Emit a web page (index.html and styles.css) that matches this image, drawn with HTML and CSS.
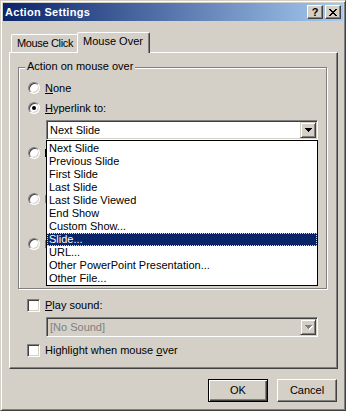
FILE: index.html
```html
<!DOCTYPE html>
<html lang="en">
<head>
  <meta charset="UTF-8">
  <title>Action Settings</title>
  <link rel="stylesheet" href="styles.css">
</head>
<body>
  <div class="window">
    <div class="titlebar">
      <span class="title">Action Settings</span>
      <div class="caption-btns">
        <span class="caption-btn help">?</span>
        <span class="caption-btn">
          <svg width="8" height="7" viewBox="0 0 8 7" shape-rendering="crispEdges"><path d="M0 0h2v1h-2zM6 0h2v1h-2zM1 1h2v1h-2zM5 1h2v1h-2zM2 2h4v1h-4zM3 3h2v1h-2zM2 4h4v1h-4zM1 5h2v1h-2zM5 5h2v1h-2zM0 6h2v1h-2zM6 6h2v1h-2z"/></svg>
        </span>
      </div>
    </div>

    <div class="client">
      <div class="tabs">
        <div class="tab first-tab">Mouse Click</div>
        <div class="tab active">Mouse Over</div>
      </div>

      <div class="panel">
        <div class="group">
          <div class="group-title">Action on mouse over</div>

          <div class="option first"><span class="radio"></span><span class="label"><u>N</u>one</span></div>
          <div class="option"><span class="radio checked"></span><span class="label"><u>H</u>yperlink to:</span></div>

          <div class="combo-wrap">
            <div class="combo">
              <span class="combo-text">Next Slide</span>
              <span class="drop-btn">
                <svg width="7" height="4" viewBox="0 0 7 4" shape-rendering="crispEdges"><path d="M0 0H7V1H6V2H5V3H4V4H3V3H2V2H1V1H0Z"/></svg>
              </span>
            </div>
            <ul class="droplist">
              <li>Next Slide</li>
              <li>Previous Slide</li>
              <li>First Slide</li>
              <li>Last Slide</li>
              <li>Last Slide Viewed</li>
              <li>End Show</li>
              <li>Custom Show...</li>
              <li class="selected">Slide...</li>
              <li>URL...</li>
              <li>Other PowerPoint Presentation...</li>
              <li>Other File...</li>
            </ul>
          </div>

          <!-- rows under the open list: only the first letter's stem peeks out -->
          <div class="option run-program"><span class="radio"></span><span class="stem"></span></div>
          <div class="option run-macro disabled"><span class="radio"></span><span class="stem"></span></div>
          <div class="option object-action disabled"><span class="radio"></span><span class="stem"></span></div>
        </div>

        <div class="check-row sound"><span class="check"></span><span class="label"><u>P</u>lay sound:</span></div>
        <div class="combo disabled sound-combo">
          <span class="combo-text">[No Sound]</span>
          <span class="drop-btn">
            <svg width="7" height="4" viewBox="0 0 7 4" shape-rendering="crispEdges"><path d="M0 0H7V1H6V2H5V3H4V4H3V3H2V2H1V1H0Z"/></svg>
          </span>
        </div>
        <div class="check-row highlight"><span class="check"></span><span class="label">Highlight when mouse <u>o</u>ver</span></div>
      </div>

      <div class="buttons">
        <div class="btn default">OK</div>
        <div class="btn">Cancel</div>
      </div>
    </div>
  </div>
</body>
</html>
```

FILE: styles.css
```css
* {
  box-sizing: border-box;
}
body {
  margin: 0;
  background: #d4d0c8;
  font-family: 'Liberation Sans', Arial, sans-serif;
  font-size: 11px;
  color: #000;
}
u {
  text-decoration-thickness: 1px;
  text-underline-offset: 1px;
}

/* window frame */
.window {
  width: 346px;
  height: 411px;
  background: #d4d0c8;
  border: 1px solid;
  border-color: #d4d0c8 #404040 #404040 #d4d0c8;
  box-shadow: inset 1px 1px #fff, inset -1px -1px #808080;
  padding: 2px;
}
.titlebar {
  height: 18px;
  display: flex;
  align-items: center;
  justify-content: space-between;
  padding: 0 2px;
  background: linear-gradient(to right, #0a246a, #a6caf0);
}
.title {
  color: #fff;
  font-weight: bold;
  letter-spacing: 0.3px;
  line-height: 18px;
}
.caption-btns {
  display: flex;
  gap: 2px;
}
.caption-btn {
  width: 16px;
  height: 14px;
  display: flex;
  align-items: center;
  justify-content: center;
  background: #d4d0c8;
  border: 1px solid;
  border-color: #fff #404040 #404040 #fff;
  box-shadow: inset -1px -1px #808080;
  font-weight: bold;
  font-size: 11px;
  line-height: 12px;
}
.caption-btn svg {
  margin-left: -1px;
}

.client {
  padding: 11px 5px 5px 6px;
}

/* tabs */
.tabs {
  display: flex;
  align-items: flex-end;
  height: 20px;
  padding-left: 2px;
  position: relative;
  z-index: 1;
}
.tab {
  height: 18px;
  padding: 2px 0 0 5px;
  line-height: 13px;
  background: #d4d0c8;
  border: 1px solid;
  border-bottom: none;
  border-color: #fff #404040 transparent #fff;
  box-shadow: inset -1px 0 #808080;
  border-radius: 2px 2px 0 0;
  width: 68px;
  white-space: nowrap;
}
.first-tab {
  letter-spacing: -0.35px;
}
.tab.active {
  width: 73px;
  height: 21px;
  margin-left: -2px;
  margin-bottom: -1px;
  position: relative;
}

.panel {
  width: 329px;
  height: 317px;
  border: 1px solid;
  border-color: #fff #404040 #404040 #fff;
  box-shadow: inset -1px -1px #808080;
}

/* group box */
.group {
  margin: 14px 0 0 8px;
  width: 309px;
  height: 222px;
  border: 1px solid #808080;
  box-shadow: inset 1px 1px #fff, 1px 1px #fff;
}
.group-title {
  width: fit-content;
  margin: -8px 0 0 6px;
  padding: 0 2px;
  line-height: 13px;
  background: #d4d0c8;
}

.option {
  display: flex;
  align-items: center;
  height: 16px;
  padding-left: 9px;
  margin-top: 4px;
}
.option.first {
  margin-top: 7px;
}
.option.run-program {
  margin-top: 5px;
}
.option.run-macro {
  margin-top: 30px;
}
.option.object-action {
  margin-top: 29px;
}
.label {
  line-height: 13px;
  margin-left: 5px;
  white-space: nowrap;
}
.stem {
  width: 1px;
  height: 8px;
  margin-left: 5px;
  background: #000;
}
.disabled .stem {
  background: #808080;
  box-shadow: 1px 1px #fff;
}

.radio {
  width: 12px;
  height: 12px;
  flex: none;
  border-radius: 50%;
  background: #fff;
  border: 1px solid;
  border-color: #808080 #fff #fff #808080;
  box-shadow: inset 1px 1px #404040, inset -1px -1px #d4d0c8;
  display: flex;
  align-items: center;
  justify-content: center;
}
.radio.checked::after {
  content: '';
  width: 4px;
  height: 4px;
  border-radius: 50%;
  background: #000;
}

.check {
  width: 13px;
  height: 13px;
  flex: none;
  background: #fff;
  border: 1px solid;
  border-color: #808080 #fff #fff #808080;
  box-shadow: inset 1px 1px #404040, inset -1px -1px #d4d0c8;
}
.check-row {
  display: flex;
  align-items: center;
  height: 16px;
  margin-left: 17px;
}
.check-row.sound {
  margin-top: 8px;
}
.check-row.highlight {
  margin-top: 5px;
}

/* combo boxes */
.combo-wrap {
  position: relative;
  z-index: 2;
  margin: 4px 0 0 27px;
  width: 272px;
}
.combo {
  width: 272px;
  height: 20px;
  display: flex;
  align-items: center;
  padding: 1px;
  background: #fff;
  border: 1px solid;
  border-color: #808080 #fff #fff #808080;
  box-shadow: inset 1px 1px #404040, inset -1px -1px #d4d0c8;
}
.combo-text {
  margin-left: 2px;
  line-height: 13px;
}
.drop-btn {
  margin-left: auto;
  width: 16px;
  height: 16px;
  display: flex;
  align-items: center;
  justify-content: center;
  background: #d4d0c8;
  border: 1px solid;
  border-color: #d4d0c8 #404040 #404040 #d4d0c8;
  box-shadow: inset 1px 1px #fff, inset -1px -1px #808080;
}
.combo.disabled {
  background: #d4d0c8;
  color: #808080;
}
.combo.disabled .drop-btn svg {
  fill: #808080;
  filter: drop-shadow(1px 1px 0 #fff);
}
.sound-combo {
  margin: 4px 0 0 36px;
}

.droplist {
  position: absolute;
  top: 20px;
  left: 0;
  width: 272px;
  height: 146px;
  margin: 0;
  padding: 1px 0 0;
  list-style: none;
  background: #fff;
  border: 1px solid #000;
}
.droplist li {
  height: 13px;
  line-height: 13px;
  padding-left: 2px;
  white-space: nowrap;
}
.droplist li.selected {
  background: #0a246a;
  color: #fff;
  border: 1px dotted #f5db95;
  padding-left: 1px;
  line-height: 11px;
}

/* dialog buttons */
.buttons {
  display: flex;
  justify-content: flex-end;
  gap: 9px;
  margin-top: 10px;
  padding-right: 1px;
}
.btn {
  width: 60px;
  height: 23px;
  line-height: 21px;
  text-align: center;
  border: 1px solid;
  border-color: #fff #404040 #404040 #fff;
  box-shadow: inset -1px -1px #808080;
}
.btn.default {
  border-color: #000;
  box-shadow: inset 1px 1px #fff, inset -1px -1px #404040, inset -2px -2px #808080;
}
```
